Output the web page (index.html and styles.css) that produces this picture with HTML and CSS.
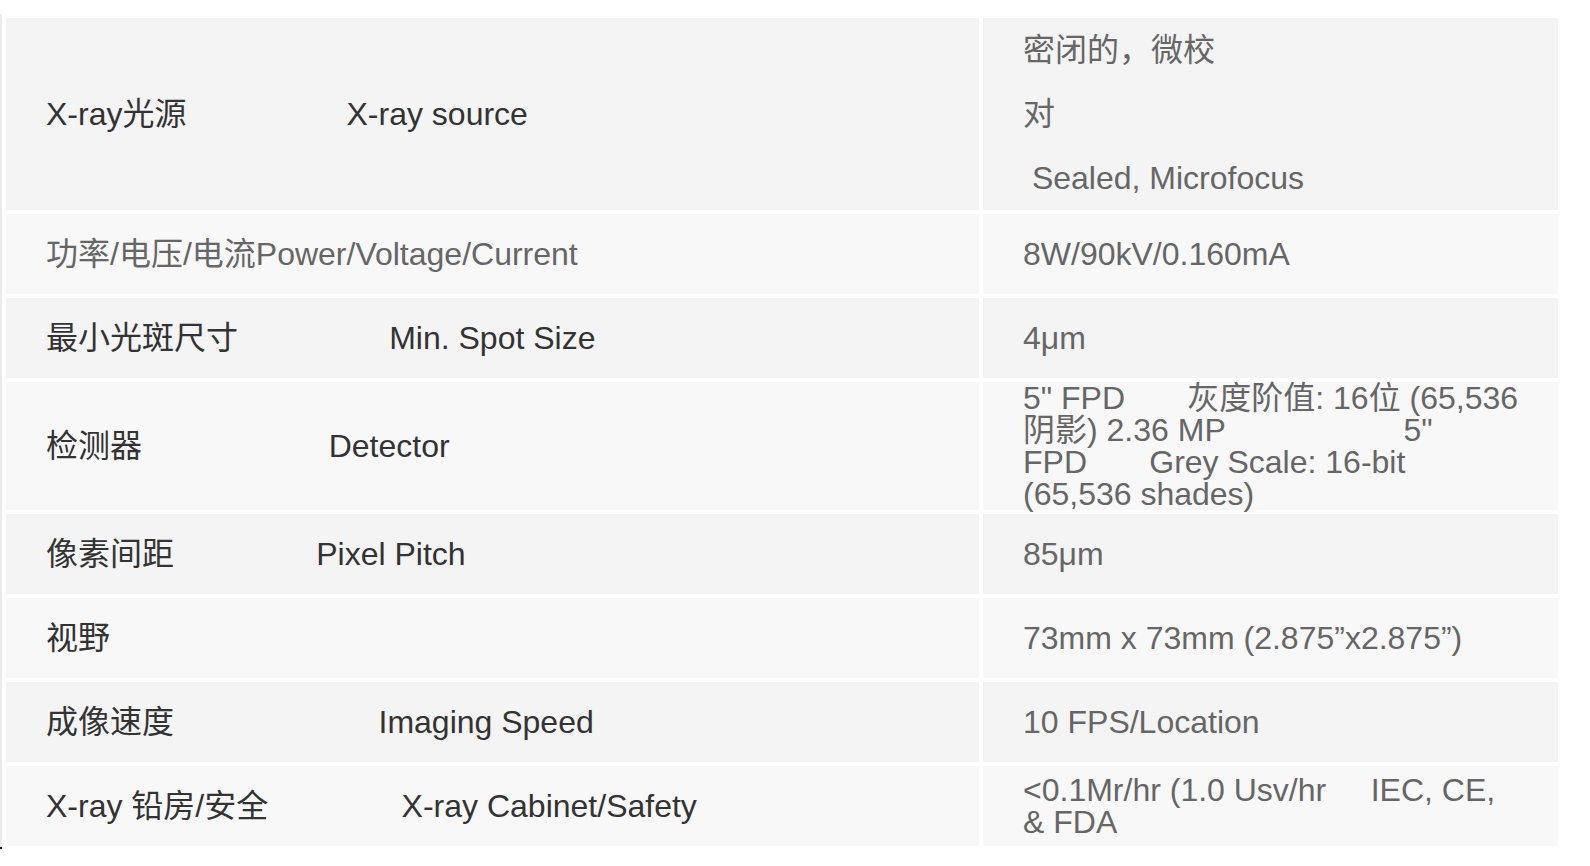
FILE: index.html
```html
<!DOCTYPE html>
<html lang="zh">
<head>
<meta charset="utf-8">
<title>Specifications</title>
<link rel="stylesheet" href="styles.css">
</head>
<body>
<div class="page">
  <table class="spec">
    <tbody>
      <tr class="odd tall">
        <td class="name">X-ray光源&nbsp;&nbsp;&nbsp;&nbsp;&nbsp;&nbsp;&nbsp;&nbsp;&nbsp;&nbsp;&nbsp;&nbsp;&nbsp;&nbsp;&nbsp;&nbsp;&nbsp;&nbsp;X-ray source</td>
        <td class="value"><p class="para">密闭的，微校</p><p class="para">对</p><p class="para">&nbsp;Sealed, Microfocus</p></td>
      </tr>
      <tr class="even">
        <td class="name light">功率/电压/电流Power/Voltage/Current</td>
        <td class="value">8W/90kV/0.160mA</td>
      </tr>
      <tr class="odd">
        <td class="name">最小光斑尺寸&nbsp;&nbsp;&nbsp;&nbsp;&nbsp;&nbsp;&nbsp;&nbsp;&nbsp;&nbsp;&nbsp;&nbsp;&nbsp;&nbsp;&nbsp;&nbsp;&nbsp;Min. Spot Size</td>
        <td class="value">4μm</td>
      </tr>
      <tr class="even">
        <td class="name">检测器&nbsp;&nbsp;&nbsp;&nbsp;&nbsp;&nbsp;&nbsp;&nbsp;&nbsp;&nbsp;&nbsp;&nbsp;&nbsp;&nbsp;&nbsp;&nbsp;&nbsp;&nbsp;&nbsp;&nbsp;&nbsp;Detector</td>
        <td class="value">5" FPD&nbsp;&nbsp;&nbsp;&nbsp;&nbsp;&nbsp;&nbsp;灰度阶值: 16位 (65,536<br>阴影) 2.36 MP&nbsp;&nbsp;&nbsp;&nbsp;&nbsp;&nbsp;&nbsp;&nbsp;&nbsp;&nbsp;&nbsp;&nbsp;&nbsp;&nbsp;&nbsp;&nbsp;&nbsp;&nbsp;&nbsp;&nbsp;5"<br>FPD&nbsp;&nbsp;&nbsp;&nbsp;&nbsp;&nbsp;&nbsp;Grey Scale: 16-bit<br>(65,536 shades)</td>
      </tr>
      <tr class="odd">
        <td class="name">像素间距&nbsp;&nbsp;&nbsp;&nbsp;&nbsp;&nbsp;&nbsp;&nbsp;&nbsp;&nbsp;&nbsp;&nbsp;&nbsp;&nbsp;&nbsp;&nbsp;Pixel Pitch</td>
        <td class="value">85μm</td>
      </tr>
      <tr class="even">
        <td class="name">视野</td>
        <td class="value">73mm x 73mm (2.875”x2.875”)</td>
      </tr>
      <tr class="odd">
        <td class="name">成像速度&nbsp;&nbsp;&nbsp;&nbsp;&nbsp;&nbsp;&nbsp;&nbsp;&nbsp;&nbsp;&nbsp;&nbsp;&nbsp;&nbsp;&nbsp;&nbsp;&nbsp;&nbsp;&nbsp;&nbsp;&nbsp;&nbsp;&nbsp;Imaging Speed</td>
        <td class="value">10 FPS/Location</td>
      </tr>
      <tr class="even">
        <td class="name">X-ray 铅房/安全&nbsp;&nbsp;&nbsp;&nbsp;&nbsp;&nbsp;&nbsp;&nbsp;&nbsp;&nbsp;&nbsp;&nbsp;&nbsp;&nbsp;&nbsp;X-ray Cabinet/Safety</td>
        <td class="value">&lt;0.1Mr/hr (1.0 Usv/hr&nbsp;&nbsp;&nbsp;&nbsp;&nbsp;IEC, CE,<br>&amp; FDA</td>
      </tr>
    </tbody>
  </table>
  <span class="caret"></span>
</div>
</body>
</html>
```

FILE: styles.css
```css
html, body {
  margin: 0;
  padding: 0;
  background: #ffffff;
}

body {
  font-family: "Liberation Sans", Arial, "Noto Sans CJK SC", sans-serif;
  font-size: 32px;
  color: #333333;
}

.page {
  position: relative;
  padding-top: 14px;
}

.spec {
  border-collapse: separate;
  border-spacing: 4px;
  border-left: 2px solid #ebebeb;
  table-layout: fixed;
  width: 1562px;
}

.spec td {
  height: 80px;
  padding: 0 40px;
  line-height: 32px;
  vertical-align: middle;
  white-space: nowrap;
}

.spec td.name {
  width: 893px;
  color: #333333;
}

.spec td.value {
  width: 495px;
  color: #666666;
}

.spec td.light {
  color: #666666;
}

.spec tr.odd td {
  background: #f4f4f4;
}

.spec tr.even td {
  background: #f8f8f8;
}

.spec tr.tall td {
  height: 192px;
}

.para {
  margin: 0;
  line-height: 64px;
}

.caret {
  position: absolute;
  left: 0;
  top: 847px;
  width: 2px;
  height: 2px;
  background: #111111;
}
```
